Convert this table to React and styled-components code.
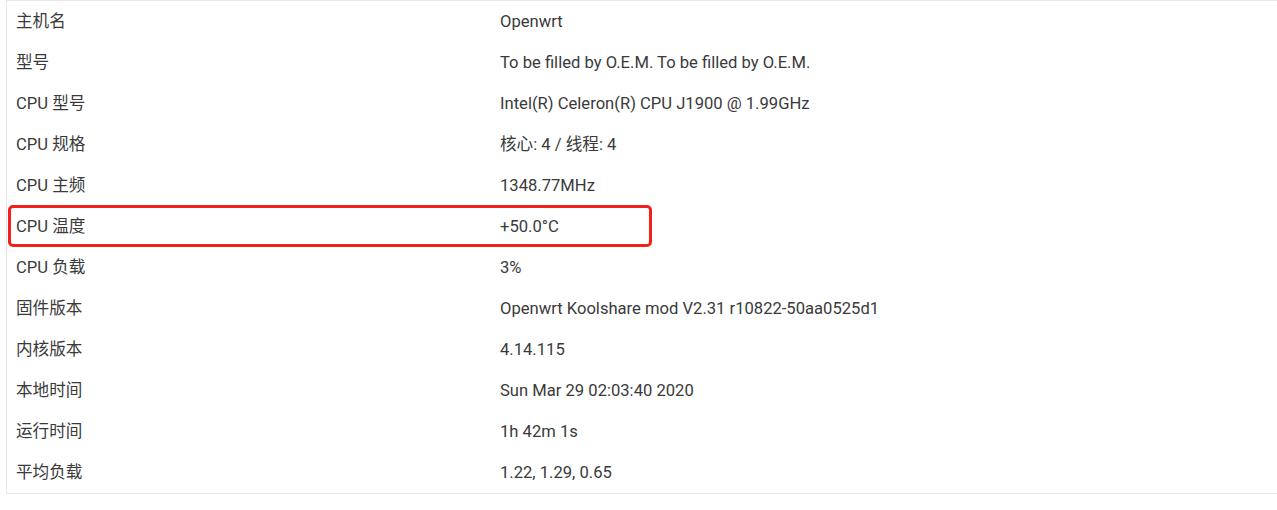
import styled, { createGlobalStyle } from "styled-components";

const Global = createGlobalStyle`
  body {
    margin: 0;
    background: #fff;
    overflow: hidden;
    font-family: Roboto, "Noto Sans CJK SC", sans-serif;
  }
`;

const Page = styled.div`
  position: relative;
  padding-left: 6px;
`;

const Table = styled.div`
  width: 1290px;
  border: 1px solid #e8e8e8;
  border-right: none;
`;

const Row = styled.div`
  display: grid;
  grid-template-columns: 493px 1fr;
  height: 41px;
  align-items: center;
  font-size: 16.6px;
  line-height: 20px;
  color: #3a3a3a;
`;

const Label = styled.div`
  padding-left: 9px;
`;

const Value = styled.div``;

const Highlight = styled.div`
  position: absolute;
  left: 8px;
  top: 205px;
  width: 638px;
  height: 36px;
  border: 3px solid #f0201c;
  border-radius: 5px;
`;

const rows = [
  ["主机名", "Openwrt"],
  ["型号", "To be filled by O.E.M. To be filled by O.E.M."],
  ["CPU 型号", "Intel(R) Celeron(R) CPU J1900 @ 1.99GHz"],
  ["CPU 规格", "核心: 4 / 线程: 4"],
  ["CPU 主频", "1348.77MHz"],
  ["CPU 温度", "+50.0°C"],
  ["CPU 负载", "3%"],
  ["固件版本", "Openwrt Koolshare mod V2.31 r10822-50aa0525d1"],
  ["内核版本", "4.14.115"],
  ["本地时间", "Sun Mar 29 02:03:40 2020"],
  ["运行时间", "1h 42m 1s"],
  ["平均负载", "1.22, 1.29, 0.65"],
];

export default function App() {
  return (
    <>
      <Global />
      <Page>
        <Table>
          {rows.map(([k, v]) => (
            <Row key={k}>
              <Label>{k}</Label>
              <Value>{v}</Value>
            </Row>
          ))}
        </Table>
        <Highlight />
      </Page>
    </>
  );
}
